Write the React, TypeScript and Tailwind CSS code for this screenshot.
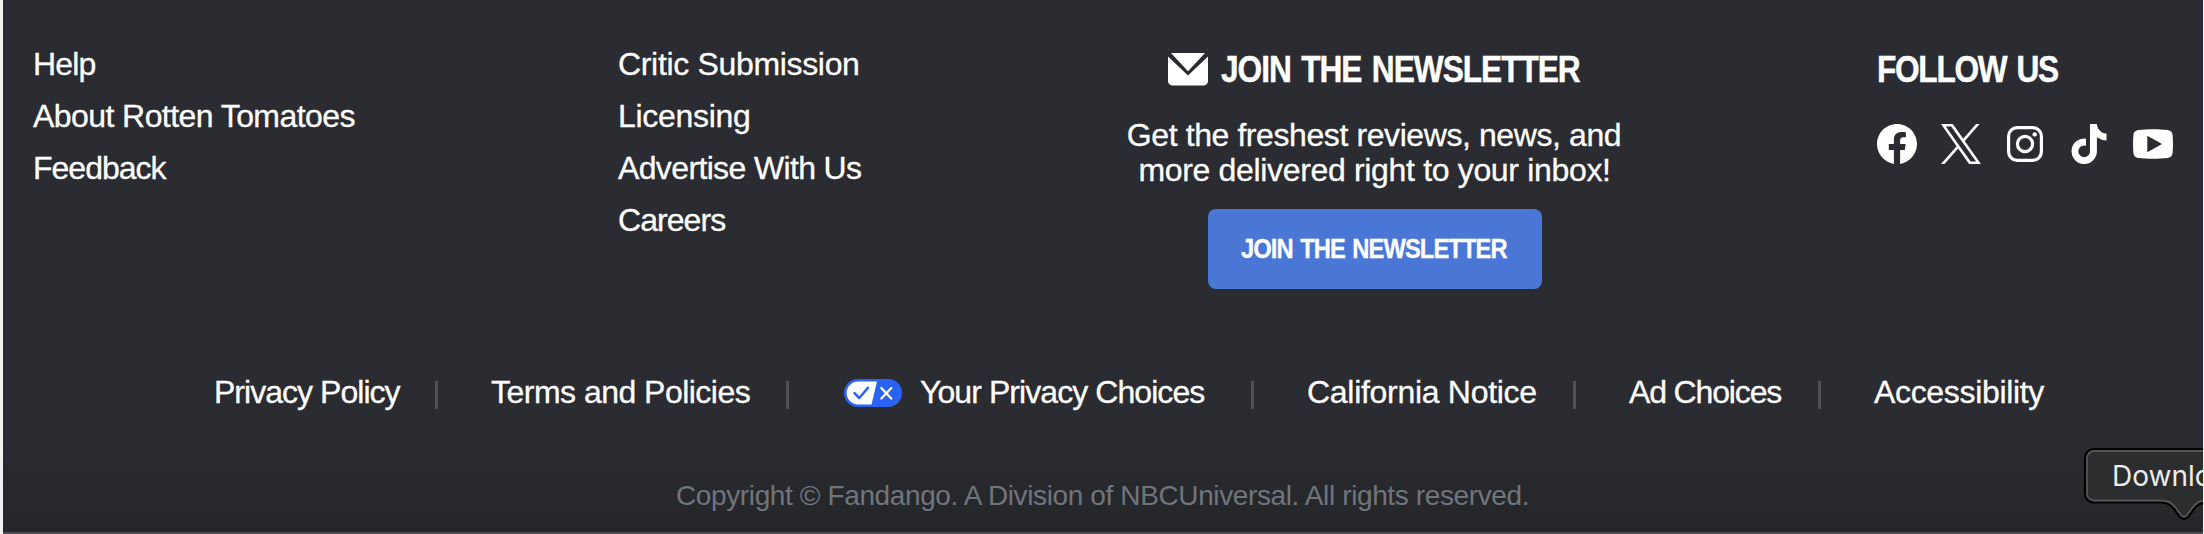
import { FaTiktok } from "react-icons/fa6";

const link = "block whitespace-nowrap";

function Envelope() {
  return (
    <svg width="40" height="33" viewBox="0 0 40 33" fill="#fff" className="shrink-0">
      <path d="M3 0H37L20 18.2Z" />
      <path d="M0 3.6L20 22.6L40 3.6V28A4.6 4.6 0 0 1 35.4 32.6H4.6A4.6 4.6 0 0 1 0 28Z" />
    </svg>
  );
}

function Facebook() {
  return (
    <svg width="40" height="40" viewBox="0 0 24 24" fill="#fff">
      <path d="M24 12.073c0-6.627-5.373-12-12-12s-12 5.373-12 12c0 5.99 4.388 10.954 10.125 11.854v-8.385H7.078v-3.47h3.047V9.43c0-3.007 1.792-4.669 4.533-4.669 1.312 0 2.686.235 2.686.235v2.953H15.83c-1.491 0-1.956.925-1.956 1.874v2.25h3.328l-.532 3.47h-2.796v8.385C19.612 23.027 24 18.062 24 12.073z" />
    </svg>
  );
}

function XLogo() {
  return (
    <svg width="40" height="40" viewBox="0 0 24 24" fill="#fff">
      <path d="M14.258 10.152 23.176 0h-2.113l-7.747 8.813L7.133 0H0l9.352 13.328L0 23.973h2.113l8.176-9.309 6.531 9.309h7.133zm-2.895 3.293-.949-1.328L2.875 1.56h3.246l6.086 8.523.945 1.328 7.91 11.078h-3.246z" />
    </svg>
  );
}

function Instagram() {
  return (
    <svg width="40" height="40" viewBox="0 0 40 40" fill="none" stroke="#fff" strokeWidth="3.2">
      <rect x="3.6" y="3.6" width="32.8" height="32.8" rx="8.6" />
      <circle cx="20" cy="20" r="7.6" />
      <circle cx="29.7" cy="10.4" r="2.2" fill="#fff" stroke="none" />
    </svg>
  );
}

function YouTube() {
  return (
    <svg width="40" height="40" viewBox="0 0 40 40" fill="#fff">
      <path
        fillRule="evenodd"
        d="M5.5 6.1C14 5 26 5 34.5 6.1C38.2 6.6 39.3 8.5 39.6 11.5C40.13 17 40.13 23 39.6 28.5C39.3 31.5 38.2 33.4 34.5 33.9C26 35 14 35 5.5 33.9C1.8 33.4 .7 31.5 .4 28.5C-.13 23 -.13 17 .4 11.5C.7 8.5 1.8 6.6 5.5 6.1ZM14.3 11.7V28.3L29 20Z"
      />
    </svg>
  );
}

function PrivacyPill() {
  return (
    <svg width="58" height="28" viewBox="0 0 58 28" className="ml-[55px] mt-[2px] shrink-0">
      <rect width="58" height="28" rx="14" fill="#2a63f3" />
      <path d="M14 2.6H33L27.5 25.4H14A11.4 11.4 0 0 1 14 2.6Z" fill="#fff" />
      <path d="M10.5 14.2L15.3 19L24 8.7" fill="none" stroke="#2a63f3" strokeWidth="2.5" strokeLinecap="round" strokeLinejoin="round" />
      <path d="M37.3 9L47.3 19.5M47.3 9L37.3 19.5" stroke="#fff" strokeWidth="2.3" strokeLinecap="round" />
    </svg>
  );
}

function Divider({ className }: { className: string }) {
  return <span className={`mt-[6px] h-[28px] w-[3px] shrink-0 bg-[#505257] ${className}`} />;
}

function Tooltip() {
  const shape =
    "M140 5H14A9 9 0 0 0 5 14V49.5A9 9 0 0 0 14 58.5H82C88 58.5 91 61 94 65L99.5 72.5Q104 77.5 108.5 72.5L114 65C117 61 120 58.5 126 58.5H140";
  return (
    <div className="absolute left-[2080px] top-[444px] h-[80px] w-[124px] overflow-hidden">
      <svg width="124" height="80" viewBox="0 0 124 80" className="absolute inset-0">
        <path d={shape} fill="#2c2d2f" stroke="#000" strokeWidth="2.2" />
        <path
          d="M140 7H14A7 7 0 0 0 7 14V49.5A7 7 0 0 0 14 56.5H82C89 56.5 92.5 59.5 95.5 63.5L101 71Q104 74.5 107 71L112.5 63.5C115.5 59.5 119 56.5 126 56.5H140"
          fill="none"
          stroke="#545557"
          strokeWidth="1.8"
        />
      </svg>
      <span className="relative left-[32px] top-[12px] block whitespace-nowrap font-['Inter',sans-serif] text-[28px] leading-[40px] text-[#ececec]">
        Download
      </span>
    </div>
  );
}

export default function App() {
  return (
    <div className="relative flex h-[534px] w-[2204px] flex-col overflow-hidden border-l-[3px] border-r border-l-[#f1f1f1] border-r-[#f1f1f1] bg-[#2a2c32] font-['Liberation_Sans',sans-serif] text-[32px] text-white">
      <div className="flex min-h-0 flex-1 flex-col border-b-2 border-[#504c53] bg-linear-to-b from-[#2a2c32] from-80% to-[#252629]">
        <div className="grid h-[334px] shrink-0 grid-cols-[585px_452px_608px_199px_auto] pl-[30px] pt-[38px]">
          <nav className="leading-[52px] [-webkit-text-stroke:0.3px]">
            <a className={`${link} tracking-[-0.82px]`}>Help</a>
            <a className={`${link} tracking-[-0.57px]`}>About Rotten Tomatoes</a>
            <a className={`${link} tracking-[-1px]`}>Feedback</a>
          </nav>
          <nav className="leading-[52px] [-webkit-text-stroke:0.3px]">
            <a className={`${link} tracking-[-0.33px]`}>Critic Submission</a>
            <a className={`${link} tracking-[-0.29px]`}>Licensing</a>
            <a className={`${link} tracking-[-0.64px]`}>Advertise With Us</a>
            <a className={`${link} tracking-[-0.94px]`}>Careers</a>
          </nav>
          <section className="flex flex-col items-center pt-[11px]">
            <div className="flex h-[40px] w-[412px] items-center gap-[13px]">
              <Envelope />
              <h2 className="w-[359px] origin-left scale-x-[0.88] whitespace-nowrap pt-[2px] text-[36px] font-bold leading-[40px] tracking-[-1.18px] [-webkit-text-stroke:0.4px] [word-spacing:3px]">
                JOIN THE NEWSLETTER
              </h2>
            </div>
            <p className="mt-[29px] text-center leading-[35px] [-webkit-text-stroke:0.3px]">
              <span className={`${link} tracking-[-0.41px]`}>Get the freshest reviews, news, and</span>
              <span className={`${link} pl-[1px] tracking-[-0.33px]`}>more delivered right to your inbox!</span>
            </p>
            <button className="ml-[2px] mt-[21px] h-[80px] w-[334px] rounded-[8px] bg-[#4a76d6] pl-[33px] text-left text-[27px] font-bold">
              <span className="block w-[266px] origin-left scale-x-[0.88] whitespace-nowrap tracking-[-1.06px] [-webkit-text-stroke:0.3px] [word-spacing:2px]">
                JOIN THE NEWSLETTER
              </span>
            </button>
          </section>
          <div />
          <section className="pt-[11px]">
            <h2 className="w-[181px] origin-left scale-x-[0.88] whitespace-nowrap pt-[1px] text-[36px] font-bold leading-[40px] tracking-[-1.5px] [-webkit-text-stroke:0.4px] [word-spacing:3px]">
              FOLLOW US
            </h2>
            <div className="mt-[34px] flex gap-6">
              <Facebook />
              <XLogo />
              <Instagram />
              <span className="flex w-[40px] justify-center">
                <FaTiktok className="h-[40px] w-[36px]" />
              </span>
              <YouTube />
            </div>
          </section>
        </div>
        <div className="mt-[38px] flex h-[40px] shrink-0 items-center whitespace-nowrap pl-[211px] leading-[40px] [-webkit-text-stroke:0.3px]">
          <a className="w-[186px] tracking-[-0.97px]">Privacy Policy</a>
          <Divider className="ml-[35px]" />
          <a className="ml-[53px] w-[260px] tracking-[-0.52px]">Terms and Policies</a>
          <Divider className="ml-[35px]" />
          <PrivacyPill />
          <a className="ml-[18px] w-[286px] tracking-[-0.93px]">Your Privacy Choices</a>
          <Divider className="ml-[45px]" />
          <a className="ml-[53px] w-[231px] tracking-[-0.29px]">California Notice</a>
          <Divider className="ml-[35px]" />
          <a className="ml-[53px] w-[153px] tracking-[-1.15px]">Ad Choices</a>
          <Divider className="ml-[36px]" />
          <a className="ml-[53px] tracking-[-0.33px]">Accessibility</a>
        </div>
        <p className="mt-[64px] whitespace-nowrap pl-[673px] text-[28px] leading-[40px] tracking-[-0.38px] text-[#70757d]">
          Copyright © Fandango. A Division of NBCUniversal. All rights reserved.
        </p>
      </div>
      <div className="absolute -left-[3px] top-0">
        <Tooltip />
      </div>
    </div>
  );
}
